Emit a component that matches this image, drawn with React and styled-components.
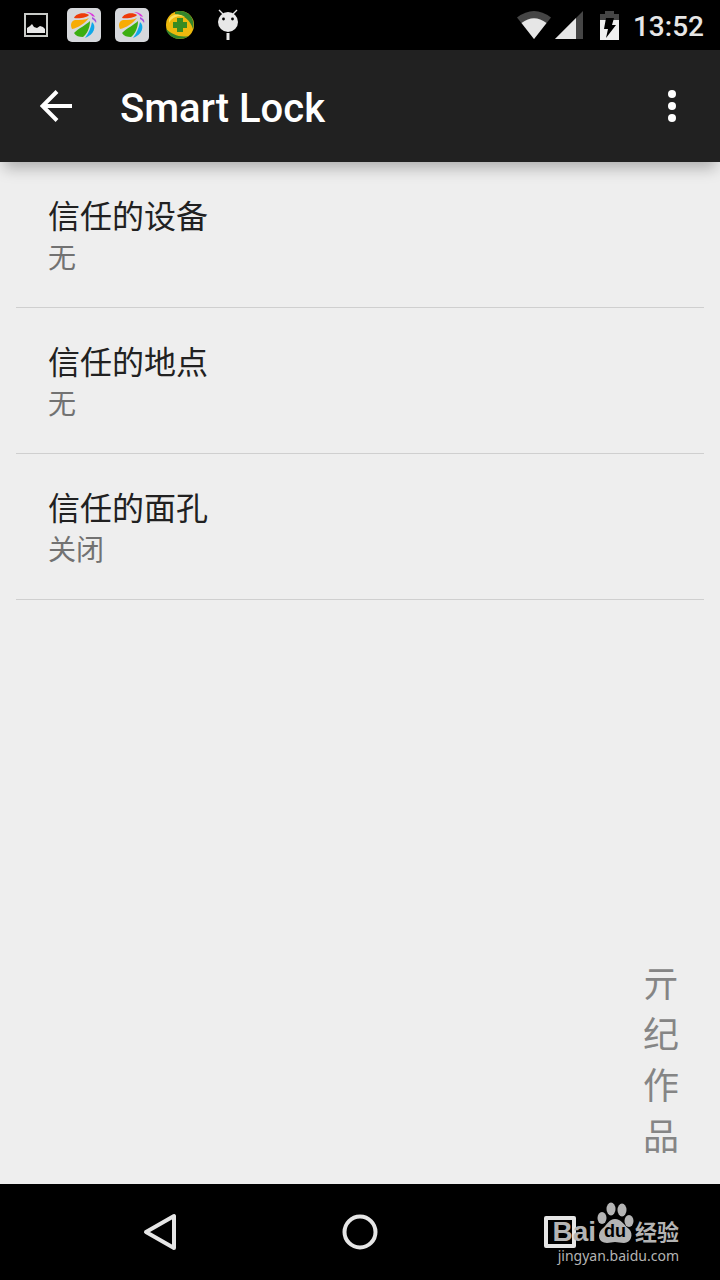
import React from "react";
import styled, { createGlobalStyle } from "styled-components";

const GlobalStyle = createGlobalStyle`
  * { box-sizing: border-box; }
  body {
    margin: 0;
    background: #eeeeee;
    font-family: Roboto, "Noto Sans CJK SC", sans-serif;
  }
  button { border: 0; padding: 0; background: none; color: inherit; font: inherit; cursor: pointer; }
  svg { display: block; flex: none; }
`;

const Screen = styled.div`
  display: flex;
  flex-direction: column;
  min-height: 100vh;
  background: #eeeeee;
`;

const StatusBar = styled.div`
  display: flex;
  justify-content: space-between;
  align-items: center;
  height: 50px;
  padding: 0 16px 0 12px;
  background: #000;
`;

const Notifications = styled.div`
  display: flex;
  align-items: center;
`;

const NotificationSlot = styled.span`
  display: flex;
  justify-content: center;
  align-items: center;
  width: 48px;
  height: 34px;
`;

const SystemStatus = styled.div`
  display: flex;
  align-items: center;
`;

const BatteryWrap = styled.span`
  margin: 0 14px 0 17px;
`;

const Clock = styled.time`
  padding-top: 4px;
  color: #e6e6e6;
  font-size: 28px;
  font-weight: 500;
  line-height: 32px;
`;

const AppBar = styled.header`
  position: relative;
  display: flex;
  align-items: center;
  height: 112px;
  padding: 0 24px 0 32px;
  background: #212121;
  color: #fff;
  box-shadow: 0 10px 14px -4px rgba(0, 0, 0, 0.27);
`;

const IconButton = styled.button`
  display: flex;
  align-items: center;
  justify-content: center;
  width: 48px;
  height: 48px;
`;

const Title = styled.h1`
  flex: 1;
  margin: 0;
  padding: 6px 0 0 40px;
  font-size: 40px;
  font-weight: 500;
  line-height: 48px;
`;

const Content = styled.main`
  display: flex;
  flex: 1;
  flex-direction: column;
  padding: 0 16px 24px;
`;

const SettingsList = styled.ul`
  margin: 0;
  padding: 0;
  list-style: none;
`;

const SettingItem = styled.li`
  border-bottom: 1px solid #cfcfcf;
`;

const SettingButton = styled.button`
  display: block;
  width: 100%;
  padding: 33px 32px 28px;
  text-align: left;
`;

const SettingTitle = styled.span`
  display: block;
  color: #212121;
  font-size: 32px;
  line-height: 44px;
`;

const SettingSummary = styled.span`
  display: block;
  color: #727272;
  font-size: 28px;
  line-height: 40px;
`;

const Signature = styled.div`
  display: flex;
  flex-direction: column;
  align-self: flex-end;
  align-items: center;
  margin-top: auto;
  padding-right: 25px;
  color: #858585;
  font-family: "Noto Sans CJK SC", sans-serif;
  font-size: 36px;
  line-height: 51px;
`;

const NavBar = styled.nav`
  position: relative;
  display: grid;
  grid-template-columns: repeat(3, 1fr);
  justify-items: center;
  align-items: center;
  height: 96px;
  padding: 0 60px;
  background: #000;
`;

const Watermark = styled.div`
  position: absolute;
  top: 16px;
  right: 41px;
  display: flex;
  flex-direction: column;
  align-items: flex-end;
  color: #b4b4b4;
`;

const Brand = styled.div`
  display: flex;
  align-items: flex-end;
  height: 44px;
`;

const BrandLatin = styled.span`
  font-family: "Liberation Sans", sans-serif;
  font-size: 28px;
  font-weight: 700;
  line-height: 24px;
`;

const BrandHan = styled.span`
  padding-left: 1px;
  font-family: "Noto Sans CJK SC", sans-serif;
  font-size: 22px;
  font-weight: 700;
  line-height: 28px;
`;

const PawWrap = styled.span`
  position: relative;
  height: 44px;
`;

const PawText = styled.span`
  position: absolute;
  inset: 20px 0 auto;
  color: #000;
  font-family: "Liberation Sans", sans-serif;
  font-size: 18px;
  font-weight: 700;
  line-height: 22px;
  text-align: center;
`;

const BrandUrl = styled.div`
  padding-top: 2px;
  font-family: "Noto Sans", sans-serif;
  font-size: 14px;
  line-height: 20px;
`;

const PictureIcon = () => (
  <svg width="24" height="24" viewBox="0 0 24 24">
    <rect x="1" y="1" width="22" height="22" fill="none" stroke="#c9cbc8" strokeWidth="2" />
    <path d="M3 20v-5l3-2 2-2 2 3 3 1 3-2 3 1 2 2v4z" fill="#e8e8e8" />
  </svg>
);

const BallIcon = () => (
  <svg width="34" height="34" viewBox="0 0 34 34">
    <rect width="34" height="34" rx="5" fill="#d6d8dc" />
    <path d="M7 10C9 5 18 4 22 7C21 9 13 11 7 10z" fill="#ee3b08" />
    <path d="M5 21C3 17 4 13 8 12C13 12 18 12 22 10C18 15 11 20 5 21z" fill="#f7ac05" />
    <path d="M7 25C12 20 19 17 23 13C23 20 20 26 16 29C12 29 9 28 7 25z" fill="#3bae10" />
    <path d="M25 14C30 18 27 27 18 30C22 25 24 19 25 14z" fill="#11a8e8" />
    <path d="M19 4C23 4 27 6 28 9L25 8C24 6 22 5 19 4z" fill="#dc36dc" />
    <path d="M25 9C29 11 30 13 29 15C28 13 27 12 25 11z" fill="#a94ee0" />
  </svg>
);

const ShieldBallIcon = () => (
  <svg width="30" height="30" viewBox="0 0 30 30">
    <circle cx="15" cy="15" r="14" fill="#edb90d" />
    <path d="M10 2C20-2 31 6 28 19C25 10 19 5 10 4z" fill="#34852b" />
    <path d="M1 19C7 24 14 28 24 26C15 32 3 28 1 19z" fill="#34852b" />
    <path d="M4 9C8 3 16 4 20 7C13 5 7 7 4 13z" fill="#fae05c" />
    <path d="M12 8h6v4h4v6h-4v4h-6v-4H8v-6h4z" fill="#388b22" />
  </svg>
);

const RobotIcon = () => (
  <svg width="20" height="32" viewBox="0 0 20 32">
    <path d="M1 1l5 5M19 1l-5 5" stroke="#e8e8e8" strokeWidth="1.4" />
    <circle cx="10" cy="13" r="10" fill="#e8e8e8" />
    <circle cx="5.5" cy="10" r="1.4" />
    <circle cx="14.5" cy="10" r="1.4" />
    <path d="M8.5 24h3v7h-3z" fill="#e8e8e8" />
  </svg>
);

const WifiIcon = () => (
  <svg width="34" height="28" viewBox="0 0 34 28">
    <path d="M0 6.5Q17-6.500 34 6.500L17 28z" fill="#454545" />
    <path d="M4.500 12Q17 2.500 29.500 12L17 28z" fill="#e6e6e6" />
  </svg>
);

const SignalIcon = () => (
  <svg width="32" height="28" viewBox="0 0 32 28">
    <path d="M4 28L32 0v28z" fill="#454545" />
    <path d="M4 28L25 7v21z" fill="#e6e6e6" />
  </svg>
);

const BatteryIcon = () => (
  <svg width="19" height="29" viewBox="0 0 19 29">
    <path d="M5 0h9v3h5v6H0V3h5z" fill="#454545" />
    <path d="M0 9h19v20H0z" fill="#f0f0f0" />
    <path d="M6 7h8l-2 7h4L6 27l2-9H4z" fill="#000" />
  </svg>
);

const BackArrow = () => (
  <svg width="32" height="32" viewBox="0 0 32 32">
    <path d="M32 16H3M17 1.500L2.500 16L17 30.500" fill="none" stroke="#fff" strokeWidth="4" />
  </svg>
);

const MoreIcon = () => (
  <svg width="8" height="32" viewBox="0 0 8 32" fill="#fff">
    <circle cx="4" cy="4" r="4" />
    <circle cx="4" cy="16" r="4" />
    <circle cx="4" cy="28" r="4" />
  </svg>
);

const NavIcon = ({ children }) => (
  <svg width="40" height="40" viewBox="0 0 40 40" fill="none" stroke="#e6e6e6" strokeWidth="4" strokeLinejoin="round">
    {children}
  </svg>
);

const Paw = () => (
  <svg width="38" height="44" viewBox="0 0 38 44" fill="currentColor">
    <ellipse cx="6" cy="18" rx="4.500" ry="6" />
    <ellipse cx="15" cy="9" rx="4.500" ry="6.500" />
    <ellipse cx="26" cy="10" rx="4.500" ry="6.500" />
    <ellipse cx="33" cy="21" rx="4.500" ry="6" />
    <path d="M19 19C25 19 28 25 33 29C38 34 35 43 28 43C24 43 22 42 19 42C16 42 14 43 11 43C2 43 1 34 6 29C11 25 13 19 19 19z" />
  </svg>
);

const settings = [
  { title: "信任的设备", summary: "无" },
  { title: "信任的地点", summary: "无" },
  { title: "信任的面孔", summary: "关闭" },
];

export default function App() {
  return (
    <Screen>
      <GlobalStyle />
      <StatusBar>
        <Notifications>
          <NotificationSlot><PictureIcon /></NotificationSlot>
          <NotificationSlot><BallIcon /></NotificationSlot>
          <NotificationSlot><BallIcon /></NotificationSlot>
          <NotificationSlot><ShieldBallIcon /></NotificationSlot>
          <NotificationSlot><RobotIcon /></NotificationSlot>
        </Notifications>
        <SystemStatus>
          <WifiIcon />
          <SignalIcon />
          <BatteryWrap><BatteryIcon /></BatteryWrap>
          <Clock>13:52</Clock>
        </SystemStatus>
      </StatusBar>
      <AppBar>
        <IconButton aria-label="Back"><BackArrow /></IconButton>
        <Title>Smart Lock</Title>
        <IconButton aria-label="More options"><MoreIcon /></IconButton>
      </AppBar>
      <Content>
        <SettingsList>
          {settings.map((item) => (
            <SettingItem key={item.title}>
              <SettingButton>
                <SettingTitle>{item.title}</SettingTitle>
                <SettingSummary>{item.summary}</SettingSummary>
              </SettingButton>
            </SettingItem>
          ))}
        </SettingsList>
        <Signature>
          {[..."亓纪作品"].map((char) => <span key={char}>{char}</span>)}
        </Signature>
      </Content>
      <NavBar>
        <IconButton aria-label="Navigate back">
          <NavIcon><path d="M34 4v32L6 20z" /></NavIcon>
        </IconButton>
        <IconButton aria-label="Home">
          <NavIcon><circle cx="20" cy="20" r="15.500" /></NavIcon>
        </IconButton>
        <IconButton aria-label="Recent apps">
          <NavIcon><rect x="6" y="6" width="28" height="28" /></NavIcon>
        </IconButton>
        <Watermark>
          <Brand>
            <BrandLatin>Bai</BrandLatin>
            <PawWrap><Paw /><PawText>du</PawText></PawWrap>
            <BrandHan>经验</BrandHan>
          </Brand>
          <BrandUrl>jingyan.baidu.com</BrandUrl>
        </Watermark>
      </NavBar>
    </Screen>
  );
}
